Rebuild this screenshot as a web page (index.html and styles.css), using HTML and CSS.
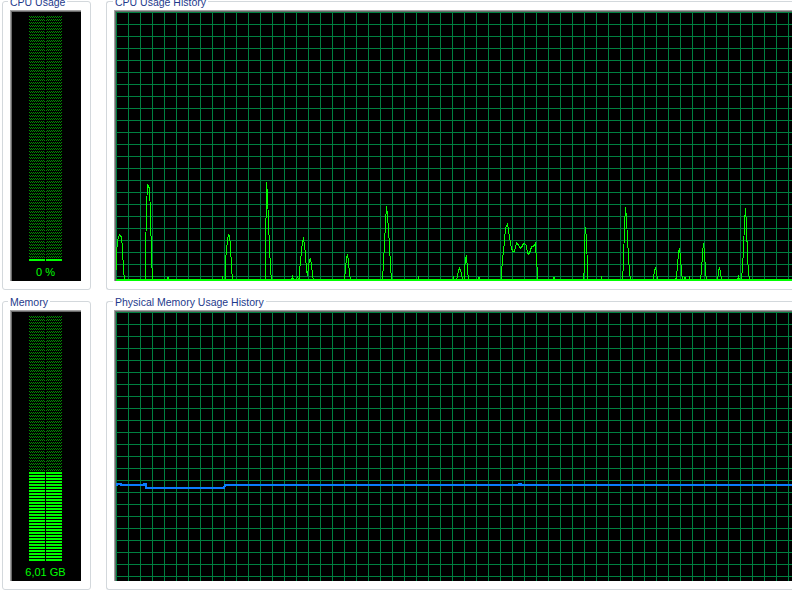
FILE: index.html
```html
<!DOCTYPE html>
<html>
<head>
<meta charset="utf-8">
<title>Performance</title>
<link rel="stylesheet" href="styles.css">
</head>
<body>
<svg class="defs" width="0" height="0" aria-hidden="true">
  <defs>
    <pattern id="grid-cpu" patternUnits="userSpaceOnUse" x="116" y="12" width="12" height="12">
      <rect x="0" y="0" width="1" height="12" fill="#008040"/>
      <rect x="0" y="0" width="12" height="1" fill="#008040"/>
    </pattern>
    <pattern id="grid-mem" patternUnits="userSpaceOnUse" x="116" y="312" width="12" height="12">
      <rect x="0" y="0" width="1" height="12" fill="#008040"/>
      <rect x="0" y="0" width="12" height="1" fill="#008040"/>
    </pattern>
    <pattern id="led-off" patternUnits="userSpaceOnUse" x="0" y="0" width="2" height="3">
      <rect x="0" y="0" width="1" height="1" fill="#009000"/>
      <rect x="1" y="1" width="1" height="1" fill="#009000"/>
    </pattern>
    <pattern id="led-on" patternUnits="userSpaceOnUse" x="0" y="0" width="2" height="3">
      <rect x="0" y="0" width="2" height="2" fill="#00ff00"/>
    </pattern>
  </defs>
</svg>
<div class="perf">
  <section class="group meter-group">
    <h2 class="caption">CPU Usage</h2>
    <div class="meter">
      <svg class="leds" width="33" height="245" viewBox="0 0 33 245" shape-rendering="crispEdges">
        <rect x="0" y="0" width="16" height="243" fill="url(#led-off)"/>
        <rect x="17" y="0" width="16" height="243" fill="url(#led-off)"/>
        <rect x="0" y="243" width="16" height="2" fill="url(#led-on)"/>
        <rect x="17" y="243" width="16" height="2" fill="url(#led-on)"/>
      </svg>
      <div class="value">0 %</div>
    </div>
  </section>
  <section class="group history-group">
    <h2 class="caption caption-wide">CPU Usage History</h2>
    <div class="chart">
      <svg class="plot" width="700" height="269" viewBox="116 12 700 269" shape-rendering="crispEdges">
        <rect x="116" y="12" width="700" height="269" fill="url(#grid-cpu)"/>
        <rect x="116" y="279" width="700" height="2" fill="#00ff00"/>
        <g fill="none" stroke="#00ff00" stroke-width="1">
          <polyline points="116.5,270 116.5,253 117.5,241 118.5,237 119.5,235 120.5,236 121.5,237 122.5,249 123.5,270 124.5,280"/>
          <polyline points="145.5,280 145.5,256 146.5,208 147.5,184 148.5,186 149.5,189 150.5,213 151.5,257 152.5,278 153.5,280"/>
          <polyline points="166.5,280 167.5,277.5 168.5,277.5 169.5,280"/>
          <polyline points="221.5,280 222.5,277.5 223.5,280"/>
          <polyline points="225.5,280 225.5,261 226.5,250 227.5,240 228.5,235 229.5,236 230.5,246 231.5,268 232.5,279 233.5,280"/>
          <polyline points="265.5,280 265.5,256 266.5,182 267.5,196 268.5,222 269.5,247 270.5,269 271.5,280"/>
          <polyline points="291.5,280 292.5,277 293.5,280"/>
          <polyline points="296.5,280 297.5,276 298.5,280"/>
          <polyline points="299.5,280 299.5,270 300.5,262 301.5,250 302.5,242 303.5,239 304.5,244 305.5,256 306.5,270 307.5,276 308.5,266 309.5,260 310.5,259 311.5,265 312.5,275 313.5,280"/>
          <polyline points="344.5,280 345.5,268 346.5,259 347.5,254 348.5,262 349.5,274 350.5,280"/>
          <polyline points="382.5,280 383.5,262 384.5,244 385.5,223 386.5,206 387.5,216 388.5,230 389.5,246 390.5,265 391.5,280"/>
          <polyline points="417.5,280 418.5,277.5 419.5,280"/>
          <polyline points="452.5,280 453.5,277.5 454.5,280"/>
          <polyline points="456.5,280 457.5,276 458.5,271 459.5,268 460.5,270 461.5,274 462.5,279 463.5,280"/>
          <polyline points="464.5,280 464.5,270 465.5,258 466.5,256 467.5,270 468.5,280"/>
          <polyline points="477.5,280 478.5,277.5 479.5,277.5 480.5,280"/>
          <polyline points="501.5,280 501.5,273 502.5,260 504.5,241 505.5,228 506.5,226 507.5,224 508.5,230 509.5,237 510.5,243 511.5,248 512.5,251 514.5,251 515.5,247 516.5,243 518.5,245 519.5,247 520.5,248 522.5,246 523.5,243 524.5,243 526.5,246 527.5,253 528.5,254 529.5,253 530.5,250 531.5,247 533.5,246 534.5,245 535.5,243 536.5,262 537.5,271 537.5,280"/>
          <polyline points="552.5,280 553.5,277.5 554.5,277.5 555.5,280"/>
          <polyline points="583.5,280 584.5,266 584.5,241 585.5,227 586.5,241 587.5,267 587.5,280"/>
          <polyline points="600.5,280 601.5,277.5 602.5,280"/>
          <polyline points="622.5,280 623.5,262 624.5,226 625.5,207 626.5,219 627.5,239 628.5,257 629.5,272 630.5,280"/>
          <polyline points="653.5,280 653.5,277 654.5,271 655.5,267 656.5,272 657.5,280"/>
          <polyline points="675.5,280 676.5,277 677.5,265 678.5,253 679.5,248 680.5,257 681.5,272 682.5,280"/>
          <polyline points="683.5,280 684.5,277.5 685.5,277.5 686.5,280"/>
          <polyline points="688.5,280 689.5,277.5 690.5,280"/>
          <polyline points="700.5,280 701.5,271 702.5,253 703.5,243 704.5,253 705.5,271 706.5,280"/>
          <polyline points="717.5,280 718.5,272 719.5,267 720.5,272 721.5,280"/>
          <polyline points="737.5,280 738.5,277 739.5,280"/>
          <polyline points="741.5,280 742.5,267 743.5,249 744.5,223 745.5,208 746.5,225 747.5,257 748.5,272 749.5,280"/>
        </g>
      </svg>
    </div>
  </section>
  <section class="group meter-group">
    <h2 class="caption">Memory</h2>
    <div class="meter">
      <svg class="leds" width="33" height="245" viewBox="0 0 33 245" shape-rendering="crispEdges">
        <rect x="0" y="0" width="16" height="156" fill="url(#led-off)"/>
        <rect x="17" y="0" width="16" height="156" fill="url(#led-off)"/>
        <rect x="0" y="156" width="16" height="89" fill="url(#led-on)"/>
        <rect x="17" y="156" width="16" height="89" fill="url(#led-on)"/>
      </svg>
      <div class="value">6,01 GB</div>
    </div>
  </section>
  <section class="group history-group">
    <h2 class="caption caption-wide">Physical Memory Usage History</h2>
    <div class="chart">
      <svg class="plot" width="700" height="269" viewBox="116 312 700 269" shape-rendering="crispEdges">
        <rect x="116" y="312" width="700" height="269" fill="url(#grid-mem)"/>
        <polyline fill="none" stroke="#0b7bff" stroke-width="2" points="116,485 117,485 117,484 121,484 121,485 144,485 144,484 146,484 146,488 224,488 225,485 519,485 519,484 521,484 521,485 816,485"/>
      </svg>
    </div>
  </section>
</div>
</body>
</html>
```

FILE: styles.css
```css
html, body {
  margin: 0;
  padding: 0;
  background: #ffffff;
  overflow: hidden;
}

body {
  font-family: "Liberation Sans", Arial, sans-serif;
  font-size: 10.5px;
}

.defs {
  position: absolute;
  width: 0;
  height: 0;
  overflow: hidden;
}

.perf {
  display: grid;
  grid-template-columns: 89px 720px;
  grid-auto-rows: 289px;
  column-gap: 15px;
  row-gap: 11px;
  padding: 1px 0 0 2px;
  width: 830px;
}

.group {
  position: relative;
  border: 1px solid #d3d8dc;
  border-radius: 3px;
  box-sizing: border-box;
  height: 289px;
}

.meter-group {
  padding: 8px 9px 8px 7px;
}

.history-group {
  padding: 8px 0 8px 7px;
  border-right: none;
  border-radius: 3px 0 0 3px;
}

.caption {
  position: absolute;
  top: -6px;
  left: 5px;
  margin: 0;
  padding: 0 2px;
  background: #ffffff;
  color: #1e3a8c;
  font-size: 10.5px;
  font-weight: normal;
  line-height: 12px;
  white-space: nowrap;
}

.caption-wide {
  left: 6px;
}

.meter {
  box-sizing: border-box;
  width: 71px;
  height: 271px;
  background: #000000;
  border-top: 1px solid #a0a0a0;
  border-left: 1px solid #a0a0a0;
  box-shadow: inset 1px 1px 0 #696969;
  padding: 5px 2px 0 1px;
  display: flex;
  flex-direction: column;
  align-items: center;
}

.leds {
  display: block;
  flex: none;
}

.value {
  margin-top: 5px;
  color: #00ff00;
  font-size: 11px;
  line-height: 12px;
  white-space: nowrap;
  text-align: center;
}

.chart {
  box-sizing: border-box;
  width: 713px;
  height: 271px;
  padding: 1px 0 0 1px;
  border-top: 1px solid #a0a0a0;
  border-left: 1px solid #a0a0a0;
  box-shadow: inset 1px 1px 0 #696969;
  background: #000000;
  overflow: hidden;
}

.plot {
  display: block;
}
```
